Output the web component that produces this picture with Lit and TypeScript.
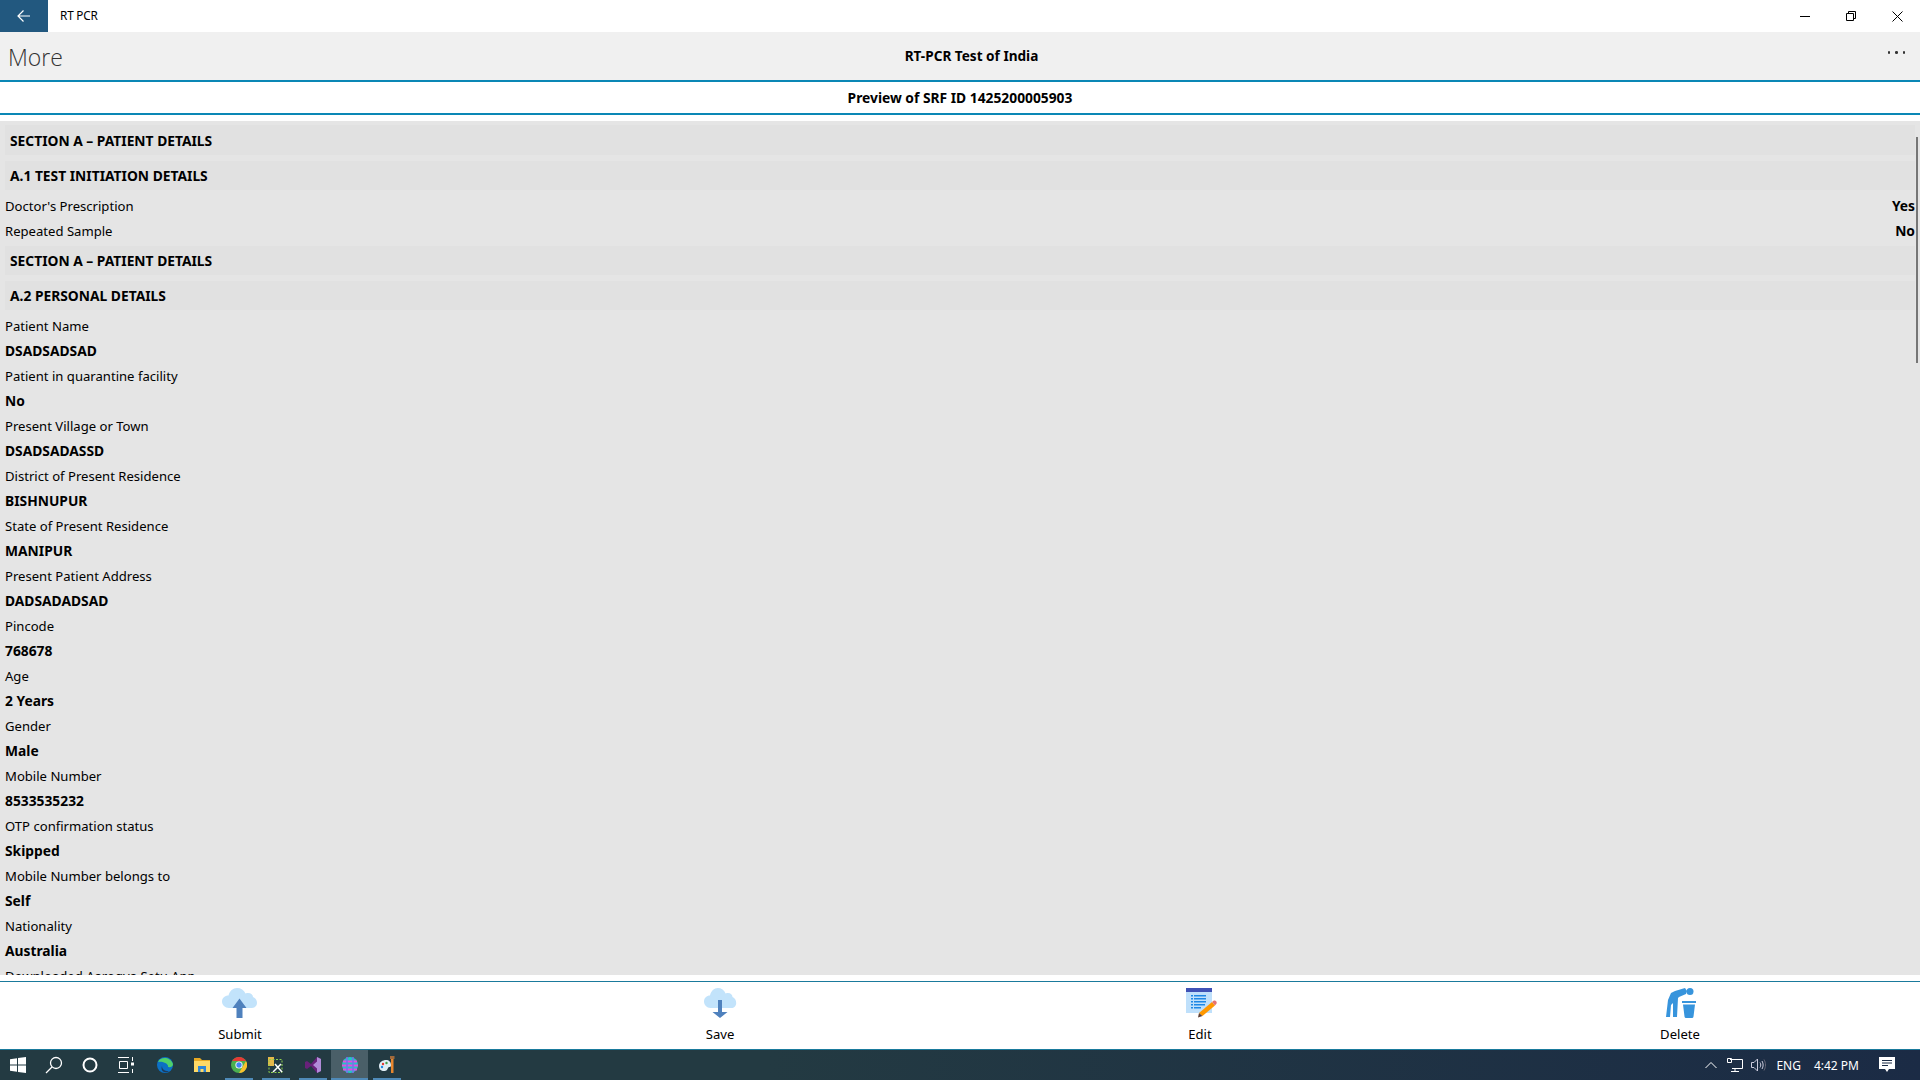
import { LitElement, html, css, svg } from "lit";
import { customElement } from "lit/decorators.js";

const rows: [string, string][] = [
  ["Patient Name", "DSADSADSAD"],
  ["Patient in quarantine facility", "No"],
  ["Present Village or Town", "DSADSADASSD"],
  ["District of Present Residence", "BISHNUPUR"],
  ["State of Present Residence", "MANIPUR"],
  ["Present Patient Address", "DADSADADSAD"],
  ["Pincode", "768678"],
  ["Age", "2 Years"],
  ["Gender", "Male"],
  ["Mobile Number", "8533535232"],
  ["OTP confirmation status", "Skipped"],
  ["Mobile Number belongs to", "Self"],
  ["Nationality", "Australia"],
];

const cloud = svg`<path fill="#c2e3fb" d="M7 20C3 20 0 17 0 13.500 0 10 3 7.500 6.500 7.500 7.500 3 11 0 15 0c4 0 7 2 8.500 5.500 1-.5 2-.5 2.500-.5 3 0 5 2 5 4 2.500 1 4 3 4 6 0 3-2.500 5-5 5z"/>`;
const cloudSmall = svg`<path transform="translate(2 0) scale(.92 1)" fill="#c2e3fb" d="M7 20C3 20 0 17 0 13.500 0 10 3 7.500 6.500 7.500 7.500 3 11 0 15 0c4 0 7 2 8.500 5.500 1-.5 2-.5 2.500-.5 3 0 5 2 5 4 2.500 1 4 3 4 6 0 3-2.500 5-5 5z"/>`;

const icons = {
  submit: html`<svg width="36" height="30" viewBox="0 0 36 30">${cloud}<path fill="#4f81bd" d="M17.500 10.500L24.500 20H20.500V30H14.500V20H10.500z"/></svg>`,
  save: html`<svg width="36" height="30" viewBox="0 0 36 30">${cloudSmall}<path fill="#4f81bd" d="M16 12h4v12h5.500L18 30l-7.500-6H16z"/></svg>`,
  edit: html`<svg width="36" height="30" viewBox="0 0 36 30"><rect x="4" y="0" width="26" height="25" fill="#bfe0fb"/><rect x="4" y="0" width="26" height="4" fill="#3f51b5"/>
    <g fill="#1e88e5"><rect x="9" y="7" width="2" height="1.500"/><rect x="12" y="7" width="12" height="1.500"/><rect x="9" y="10" width="2" height="1.500"/><rect x="12" y="10" width="12" height="1.500"/><rect x="9" y="13" width="2" height="1.500"/><rect x="12" y="13" width="12" height="1.500"/><rect x="9" y="16" width="2" height="1.500"/><rect x="12" y="16" width="11" height="1.500"/><rect x="9" y="19" width="2" height="1.500"/><rect x="12" y="19" width="7" height="1.500"/></g>
    <path fill="#ff9800" d="M30 14l3 3.500L20.500 28 17 25z"/><path fill="#e57373" d="M30 14l1.500-1.200c1-.7 2-.5 2.700.4.7 1 .7 2 0 2.800L33 17.500z"/><path fill="#5d4037" d="M17 25l3.500 3-4.500 1.500z"/></svg>`,
  del: html`<svg width="36" height="30" viewBox="0 0 36 30"><g fill="#3794dc"><circle cx="28" cy="3.500" r="3.500"/><path d="M4 29L6 12 9 5 13 3 23 0 25 3 24 6 17 9 16 10 15 29H11L11 15 9 17 8 29z"/><rect x="20" y="13" width="14" height="2"/><path d="M21 16.500h12l-1.500 12c-.1 1-1 1.500-2 1.500h-5c-1 0-1.900-.5-2-1.500z"/></g></svg>`,
};

const tb = {
  win: html`<svg width="16" height="16" viewBox="0 0 16 16"><path fill="#fff" d="M0 2.300l7-1v6.200H0zM8 1.100L16 0v7.500H8zM0 8.500h7v6.200l-7-1zM8 8.500h8V16l-8-1.100z"/></svg>`,
  search: html`<svg width="18" height="18" viewBox="0 0 18 18" fill="none" stroke="#fff" stroke-width="1.300"><circle cx="11" cy="7" r="5.500"/><path d="M7 11l-6 6"/></svg>`,
  cortana: html`<svg width="16" height="16" viewBox="0 0 16 16" fill="none" stroke="#fff" stroke-width="2"><circle cx="8" cy="8" r="6.500"/></svg>`,
  task: html`<svg width="16" height="16" viewBox="0 0 16 16" fill="none" stroke="#fff" stroke-width="1"><path d="M0 .5h11M0 15.500h11M1.500 4.500h8v7h-8z"/><path d="M14.500 0v4M14.500 12v4" /><rect x="13" y="5.500" width="3" height="3" fill="#fff" stroke="none"/></svg>`,
  edge: html`<svg width="16" height="16" viewBox="0 0 16 16"><circle cx="8" cy="8" r="8" fill="#0c70c4"/><path fill="#4fd06b" d="M1 5c2-5 12-6 15 2 0 3-3 3.500-5 3 1-4-7-6-10-5z"/><path fill="#1e3a5a" d="M5 9c0 4 4 5.500 7 5-4 3-9 0-7-5z"/></svg>`,
  folder: html`<svg width="16" height="14" viewBox="0 0 16 14"><path fill="#e8a923" d="M0 0h6l2 2h8v3H0z"/><path fill="#ffd966" d="M0 3h16v11H0z"/><path fill="#2f86d6" d="M4 8h8v6h-2.500v-3h-3v3H4z"/></svg>`,
  chrome: html`<svg width="16" height="16" viewBox="0 0 16 16"><circle cx="8" cy="8" r="8" fill="#4caf50"/><path fill="#e53935" d="M1.100 4A8 8 0 0 1 15 4H8z"/><path fill="#fbc02d" d="M15 4a8 8 0 0 1-7 12l3.500-6z"/><circle cx="8" cy="8" r="3.600" fill="#fff"/><circle cx="8" cy="8" r="2.700" fill="#4285f4"/></svg>`,
  tool: html`<svg width="18" height="18" viewBox="0 0 18 18"><rect x="1" y="1" width="6" height="9" fill="#e6b84a"/><path fill="none" stroke="#8fd14f" stroke-width="1" stroke-dasharray="2 1.500" d="M2 3.500h13v13H2z"/><path stroke="#fff" stroke-width="1.500" d="M6 16l8-8M8 8l7 8"/></svg>`,
  vs: html`<svg width="16" height="16" viewBox="0 0 16 16"><path fill="#68217a" d="M0 5l2-1 4 3 6-7 4 2v12l-4 2-6-7-4 3-2-1z"/><path fill="#b18bd8" d="M12 0l4 2v12l-4 2zM12 4.500L8 8l4 3.500z"/></svg>`,
  globe: html`<svg width="16" height="16" viewBox="0 0 16 16"><circle cx="8" cy="8" r="8" fill="#25c5c5"/><path stroke="#e04fe0" stroke-width="2" d="M1 4.500h14M0 8.500h16M1 12.500h14"/><path stroke="#7a6cf0" stroke-width="1.500" d="M5 0v16M11 0v16"/></svg>`,
  paint: html`<svg width="18" height="18" viewBox="0 0 18 18"><path fill="#dfeef5" d="M1 10c0-4 4-6 7-6 3 0 5 2 5 5s-2 1-3 3-1 3-4 3-5-2-5-5z"/><circle cx="5" cy="8" r="1.200" fill="#e53935"/><circle cx="8.500" cy="7" r="1.200" fill="#43a047"/><circle cx="4" cy="11" r="1.200" fill="#1e88e5"/><rect x="13" y="3" width="2.500" height="14" fill="#e8862d"/><rect x="12" y="0" width="4.500" height="3" fill="#a06a3c"/></svg>`,
};

@customElement("app-root")
export class AppRoot extends LitElement {
  static styles = css`
    :host { display: flex; flex-direction: column; width: 1920px; height: 1080px; overflow: hidden; background: #fff; color: #000; font-family: "Noto Sans", "Open Sans", sans-serif; font-size: 13.1px; position: relative; }
    .titlebar { height: 32px; display: flex; align-items: center; flex: none; }
    .back { width: 48px; height: 32px; background: #22587f; display: flex; align-items: center; justify-content: center; }
    .apptitle { margin-left: 12px; font-size: 11.8px; letter-spacing: -0.2px; padding-bottom: 2px; }
    .winbtns { margin-left: auto; display: flex; }
    .winbtn { width: 46px; height: 32px; display: flex; align-items: center; justify-content: center; }
    .cmd { height: 48px; flex: none; background: #f0f0f0; border-bottom: 2px solid #0a87b5; display: grid; grid-template-columns: 1fr auto 1fr; align-items: center; padding-left: 8px; padding-right: 15px; }
    .more { font-size: 23px; font-weight: 300; color: #333; font-family: "Open Sans", sans-serif; line-height: 48px; padding-top: 1px; }
    .cmdtitle { font-weight: 700; font-size: 13.6px; padding-left: 30px; padding-bottom: 3px; }
    .dots { justify-self: end; display: flex; gap: 5px; padding-bottom: 8px; }
    .dots i { width: 2.5px; height: 2.5px; border-radius: 50%; background: #333; display: block; }
    .preview { height: 31px; flex: none; border-bottom: 2px solid #0a87b5; display: flex; align-items: center; justify-content: center; font-weight: 700; font-size: 13.8px; }
    .body { flex: none; height: 854px; margin-top: 6px; background: #e5e5e5; overflow: hidden; position: relative; padding: 4px 0 0 0; box-sizing: border-box; }
    .head { height: 30px; margin-left: 5px; margin-right: 5px; background: #e1e1e1; display: flex; align-items: center; padding: 1px 0 0 5px; box-sizing: border-box; font-weight: 700; font-size: 13.8px; }
    .head.sub { height: 29px; margin-top: 6px; margin-bottom: 3px; padding-top: 0; }
    .head.again { margin-top: 3px; height: 29px; padding-top: 0; }
    .row { height: 25px; padding: 0 5px; display: flex; align-items: center; justify-content: space-between; white-space: nowrap; }
    .row b { font-weight: 700; font-size: 13.8px; }
    .bar { position: absolute; right: 2px; top: 16px; width: 2px; height: 226px; background: #767676; }
    .actions { flex: none; height: 67px; margin-top: 6px; border-top: 1px solid #1a7a9c; border-bottom: 1px solid #1a7a9c; display: grid; grid-template-columns: repeat(4, 1fr); }
    .action { display: flex; flex-direction: column; align-items: center; padding-top: 6px; }
    .action svg { display: block; }
    .action span { font-size: 13.1px; line-height: 20px; margin-top: 6px; }
    .taskbar { flex: 1; min-height: 0; background: linear-gradient(90deg, #233a42 0%, #233a42 40%, #1b2b45 100%); display: flex; align-items: stretch; color: #fff; }
    .ti { width: 36px; display: flex; align-items: center; justify-content: center; flex: none; position: relative; }
    .ti.app { width: 37px; }
    .ti.first { width: 36px; margin-left: 3px; }
    .ti.open::after { content: ""; position: absolute; left: 5px; right: 4px; bottom: 0; height: 2px; background: #4f8ab8; }
    .ti.active { background: #4a5f68; }
    .ti.active::after { left: 0; right: 0; }
    .tray { margin-left: auto; display: flex; align-items: center; font-size: 12px; }
    .tray span { display: block; }
    .m1 { margin-left: 10px; }
    .m2 { margin-left: 8px; }
    .m3 { margin-left: 9px; }
    .m4 { margin-left: 13px; }
    .m5 { margin-left: 20px; margin-right: 25px; }
  `;

  private item(icon: unknown, cls = "") {
    return html`<div class="ti ${cls}">${icon}</div>`;
  }

  render() {
    return html`
      <div class="titlebar">
        <div class="back"><svg width="14" height="14" viewBox="0 0 14 14" fill="none" stroke="#fff" stroke-width="1.200"><path d="M13 7H1M6.500 1.500L1 7l5.500 5.500"/></svg></div>
        <div class="apptitle">RT PCR</div>
        <div class="winbtns">
          <div class="winbtn"><svg width="10" height="10" viewBox="0 0 10 10"><path stroke="#000" d="M0 5.500h10"/></svg></div>
          <div class="winbtn"><svg width="10" height="10" viewBox="0 0 10 10" fill="none" stroke="#000"><path d="M.5 2.500h7v7h-7zM2.500 2.500v-2h7v7h-2"/></svg></div>
          <div class="winbtn"><svg width="11" height="11" viewBox="0 0 11 11" fill="none" stroke="#000"><path d="M.5.500l10 10M10.500.500l-10 10"/></svg></div>
        </div>
      </div>
      <div class="cmd">
        <div class="more">More</div>
        <div class="cmdtitle">RT-PCR Test of India</div>
        <div class="dots"><i></i><i></i><i></i></div>
      </div>
      <div class="preview">Preview of SRF ID 1425200005903</div>
      <div class="body">
        <div class="head">SECTION A – PATIENT DETAILS</div>
        <div class="head sub">A.1 TEST INITIATION DETAILS</div>
        <div class="row"><span>Doctor's Prescription</span><b>Yes</b></div>
        <div class="row"><span>Repeated Sample</span><b>No</b></div>
        <div class="head again">SECTION A – PATIENT DETAILS</div>
        <div class="head sub">A.2 PERSONAL DETAILS</div>
        ${rows.map(([l, v]) => html`<div class="row"><span>${l}</span></div><div class="row"><b>${v}</b></div>`)}
        <div class="row"><span>Downloaded Aarogya Setu App</span></div>
        <div class="bar"></div>
      </div>
      <div class="actions">
        <div class="action">${icons.submit}<span>Submit</span></div>
        <div class="action">${icons.save}<span>Save</span></div>
        <div class="action">${icons.edit}<span>Edit</span></div>
        <div class="action">${icons.del}<span>Delete</span></div>
      </div>
      <div class="taskbar">
        ${this.item(tb.win)}${this.item(tb.search)}${this.item(tb.cortana)}${this.item(tb.task)}
        ${this.item(tb.edge, "first")}${this.item(tb.folder, "app")}${this.item(tb.chrome, "app open")}${this.item(tb.tool, "app open")}${this.item(tb.vs, "app open")}${this.item(tb.globe, "app open active")}${this.item(tb.paint, "app open")}
        <div class="tray">
          <svg width="12" height="8" viewBox="0 0 12 8" fill="none" stroke="#fff"><path d="M.5 7L6 1.500 11.500 7"/></svg>
          <svg class="m1" width="16" height="14" viewBox="0 0 16 14" fill="none" stroke="#fff"><path d="M3 1.500h12.500v9H5M8 10.500v3M4 13.500h8M.5.500h4v4h-4z"/></svg>
          <svg class="m2" width="16" height="14" viewBox="0 0 16 14" fill="none" stroke="#ccd"><path d="M.5 4.500h2.500L6.500 1v12L3 9.500H.5z"/><path d="M9 4.500c1 1.500 1 3.500 0 5M11 3c1.500 2.500 1.500 5.500 0 8" /><path stroke="#667" d="M13 1.500c2 3.500 2 7.500 0 11"/></svg>
          <span class="m3">ENG</span>
          <span class="m4">4:42 PM</span>
          <svg class="m5" width="16" height="16" viewBox="0 0 16 16"><path fill="#fff" d="M0 0h16v12h-6l-2 3-2-3H0z"/><path stroke="#1b2b45" d="M3 3.500h10M3 6h10M3 8.500h6"/></svg>
        </div>
      </div>
    `;
  }
}
